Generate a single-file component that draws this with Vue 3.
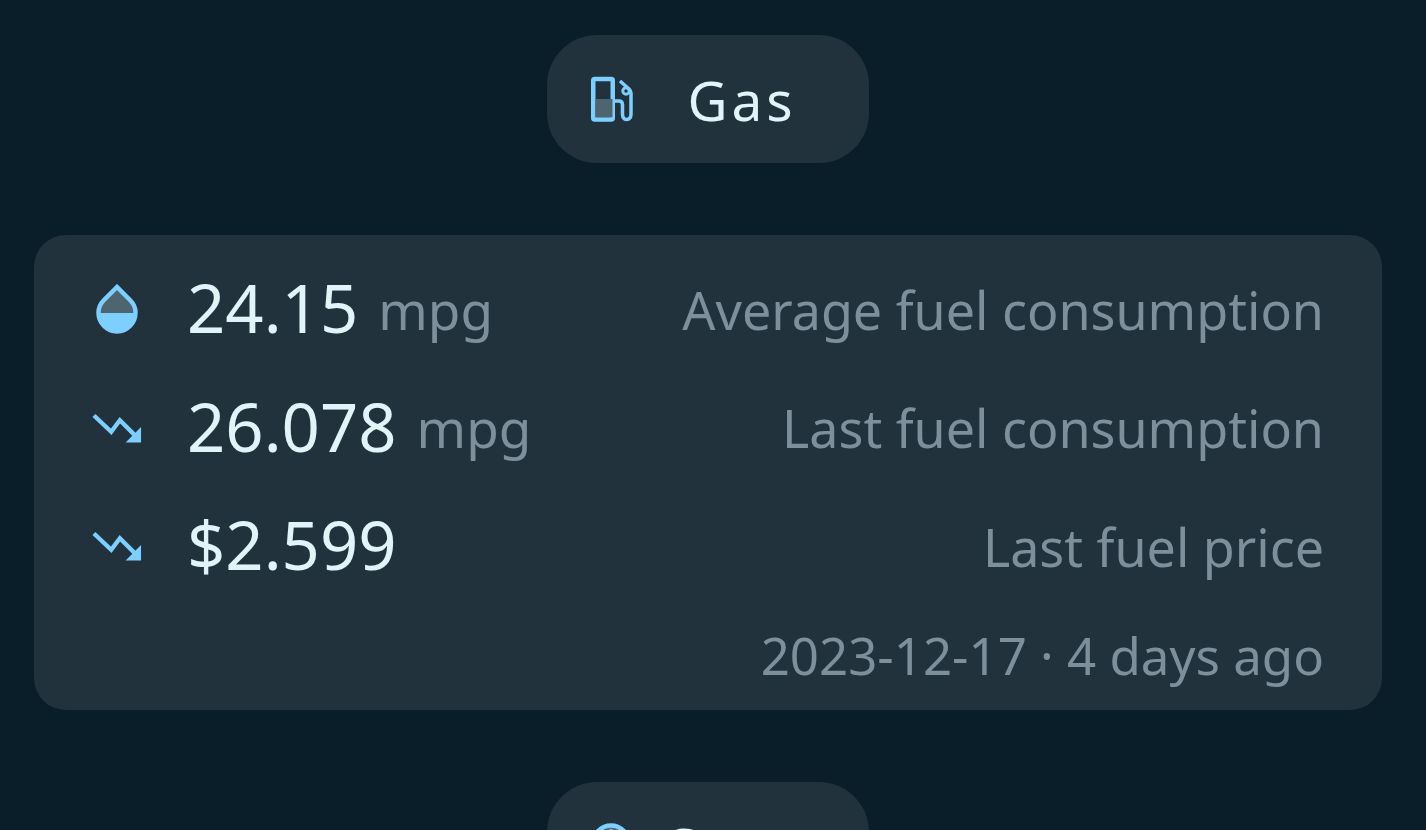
<script setup>
const rows = [
  { icon: 'drop', value: '24.15', unit: 'mpg', label: 'Average fuel consumption' },
  { icon: 'trend', value: '26.078', unit: 'mpg', label: 'Last fuel consumption' },
  { icon: 'trend', value: '$2.599', unit: '', label: 'Last fuel price' },
];
</script>

<template>
  <main class="page">
    <div class="pill">
      <svg class="pill-icon" width="44" height="48" viewBox="0 0 44 48">
        <rect x="3.250" y="3.950" width="19.500" height="40.500" rx="1.500" fill="none" stroke="#7dcfff" stroke-width="4.500" />
        <rect x="5.500" y="24" width="17" height="18.200" fill="#4e6570" />
        <path d="M30 6L39 14C40 15 41 16 41 18V39C41 43 39 44.500 36.500 44.500S32.500 43 32.500 39V30C32.500 27 31 26 29 26H24" fill="none" stroke="#7dcfff" stroke-width="3.500" />
        <circle cx="36" cy="16" r="3.200" fill="none" stroke="#7dcfff" stroke-width="3" />
      </svg>
      <span class="pill-label">Gas</span>
    </div>

    <section class="card">
      <div v-for="row in rows" :key="row.label" class="row">
        <span class="row-icon">
          <svg v-if="row.icon === 'drop'" width="42" height="50" viewBox="0 0 42 50">
            <path d="M21 3L8 16C4.500 19.500 2.500 23.500 2.500 28.500C2.500 39 11 47.500 21 47.500S39.500 39 39.500 28.500C39.500 23.500 37.500 19.500 34 16Z" fill="#4e6570" stroke="#7dcfff" stroke-width="4.500" />
            <path d="M1 29H41C41 41 32 49 21 49S1 41 1 29Z" fill="#7dcfff" />
          </svg>
          <svg v-else width="52" height="32" viewBox="0 0 52 32">
            <path d="M2 3L20 20L29 8L46 25" fill="none" stroke="#7dcfff" stroke-width="4.500" />
            <path d="M51 15V31H35Z" fill="#7dcfff" />
          </svg>
        </span>
        <span class="value">{{ row.value }}</span>
        <span v-if="row.unit" class="unit">{{ row.unit }}</span>
        <span class="label">{{ row.label }}</span>
      </div>
      <div class="date">2023-12-17 · 4 days ago</div>
    </section>

    <div class="pill">
      <svg class="pill-icon" width="44" height="48" viewBox="0 0 44 48">
        <circle cx="21" cy="21" r="17.500" fill="#4e6570" stroke="#7dcfff" stroke-width="4.500" />
        <path d="M21 7V13" stroke="#a9bcc5" stroke-width="3" />
      </svg>
      <span class="pill-label">Costs</span>
    </div>
  </main>
</template>

<style>
html, body {
  margin: 0;
  background: #0a1e29;
  height: 100%;
  overflow: hidden;
}
</style>

<style scoped>
.page {
  display: flex;
  flex-direction: column;
  align-items: center;
  gap: 72px;
  padding: 35px 44px 0 34px;
  font-family: "Noto Sans", "Open Sans", sans-serif;
}

.pill {
  display: flex;
  align-items: center;
  flex-shrink: 0;
  box-sizing: border-box;
  width: 322px;
  height: 128px;
  padding: 0 31px 0 43px;
  border-radius: 50px;
  background: #21323d;
}

.pill-icon {
  flex-shrink: 0;
}

.pill-label {
  flex: 1;
  margin-left: 12px;
  font-size: 55px;
  letter-spacing: 4px;
  text-align: center;
  color: #e0f4f9;
}

.card {
  box-sizing: border-box;
  width: 1348px;
  height: 475px;
  padding: 15px 58px 0 58px;
  border-radius: 32px;
  background: #21323d;
}

.row {
  display: flex;
  align-items: center;
  height: 118.500px;
}

.row-icon {
  display: flex;
  justify-content: center;
  width: 50px;
  margin-right: 45px;
}

.value {
  margin-bottom: 4px;
  font-size: 67px;
  color: #e0f4f9;
}

.unit {
  margin-left: 20px;
  font-size: 53px;
  color: #7d8f9b;
}

.label {
  margin-left: auto;
  font-size: 52px;
  color: #7d8f9b;
}

.date {
  margin-top: 15px;
  text-align: right;
  font-size: 51px;
  line-height: 68px;
  color: #7d8f9b;
}
</style>
